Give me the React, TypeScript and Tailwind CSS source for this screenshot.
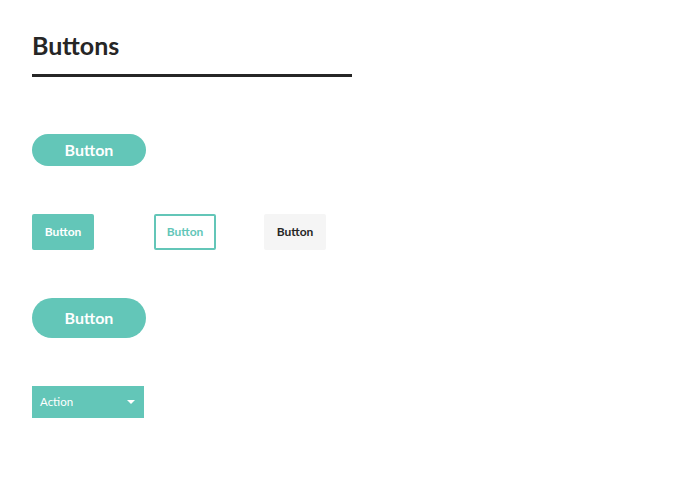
export default function App() {
  return (
    <div className="min-h-[500px] w-[700px] bg-white px-8 pt-[31px]" style={{ fontFamily: "Lato, 'Noto Sans', sans-serif" }}>
      <h1 className="text-[25px] font-bold leading-[28px] text-[#262626]">Buttons</h1>
      <div className="mt-[15px] h-[3px] w-[320px] bg-[#262626]" />

      <div className="mt-[57px] flex">
        <button className="flex h-8 w-[114px] items-center justify-center rounded-full bg-[#63c6b8] text-[16px] font-bold text-white">
          Button
        </button>
      </div>

      <div className="mt-12 flex items-center">
        <button className="flex h-9 w-[62px] items-center justify-center rounded-[2px] bg-[#63c6b8] text-[12px] font-bold text-white">
          Button
        </button>
        <button className="ml-[60px] flex h-9 w-[62px] items-center justify-center rounded-[2px] border-2 border-[#63c6b8] bg-white text-[12px] font-bold text-[#63c6b8]">
          Button
        </button>
        <button className="ml-12 flex h-9 w-[62px] items-center justify-center rounded-[2px] bg-[#f5f5f5] text-[12px] font-bold text-[#262626]">
          Button
        </button>
      </div>

      <div className="mt-12 flex">
        <button className="flex h-10 w-[114px] items-center justify-center rounded-full bg-[#63c6b8] text-[16px] font-bold text-white">
          Button
        </button>
      </div>

      <div className="mt-12 flex">
        <button className="flex h-8 w-[112px] items-center justify-between bg-[#63c6b8] pl-2 pr-[9px] text-[11.5px] text-white">
          <span>Action</span>
          <svg width="8" height="4" viewBox="0 0 8 4">
            <path d="M0 0h8L4 4z" fill="white" />
          </svg>
        </button>
      </div>
    </div>
  );
}
